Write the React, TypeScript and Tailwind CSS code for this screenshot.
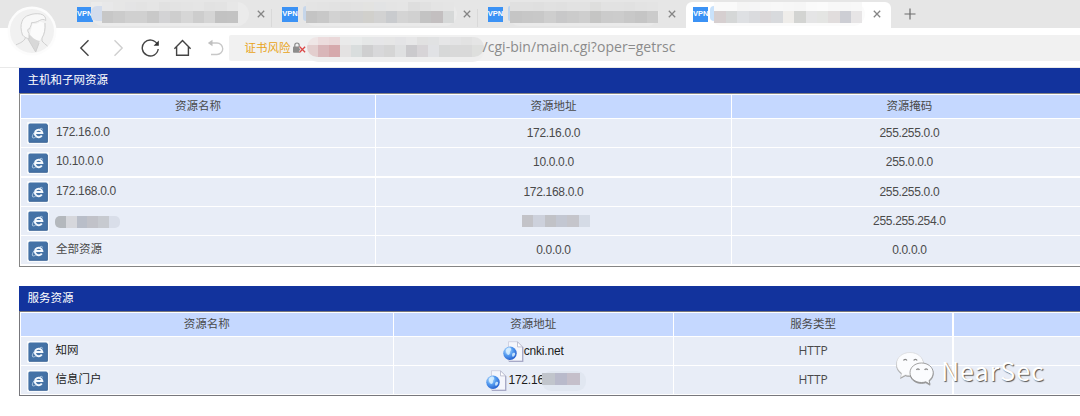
import React from "react";

const cjk = "font-['Liberation_Sans','Noto_Sans_CJK_SC',sans-serif]";
const digits = "text-[12px] tracking-[-0.32px]";

function Mosaic({ upper = [], lower, className, upperClass = "h-[10px]", lowerClass = "h-[12px]" }: {
  upper?: string[];
  lower: string[];
  className: string;
  upperClass?: string;
  lowerClass?: string;
}) {
  return (
    <div className={`flex shrink-0 flex-col overflow-hidden ${className}`}>
      {upper.length > 0 && (
        <div className={`flex ${upperClass}`}>
          {upper.map((c, i) => <span key={i} className={`flex-1 ${c}`} />)}
        </div>
      )}
      <div className={`flex ${lowerClass}`}>
        {lower.map((c, i) => <span key={i} className={`flex-1 ${c}`} />)}
      </div>
    </div>
  );
}

function Close() {
  return (
    <svg className="h-[8px] w-[8px] shrink-0" viewBox="0 0 8 8" fill="none" stroke="#858585" strokeWidth="1.3">
      <path d="M.8.8l6.4 6.4M7.2.8L.8 7.2" />
    </svg>
  );
}

function VpnBadge() {
  return (
    <span className="flex h-[15px] w-[15.5px] shrink-0 items-center justify-center overflow-hidden bg-[#3b92f5] font-['Liberation_Sans',sans-serif] text-[7.5px] leading-none font-bold text-white">
      VPN
    </span>
  );
}

const tabs = [
  {
    smear: "ml-[-1.5px] w-[158px] rounded-r-[12px] rounded-bl-[12px] bg-[#ebebeb] pl-[11px] pr-[11px]",
    left: "-ml-[11px] w-[11px] rounded-l-[6px] bg-[#d3dcec]",
    upper: ["bg-[#e8e8e9]", "bg-[#e6e6e6]", "bg-[#e4e4e5]", "bg-[#e3e3e3]", "bg-[#e5e5e5]", "bg-[#e1e1e1]", "bg-[#e3e3e3]", "bg-[#e4e4e4]", "bg-[#e5e5e5]", "bg-[#e2e2e2]", "bg-[#e3e3e3]", "bg-[#e7e7e7]"],
    lower: ["bg-[#c7c7c7]", "bg-[#cbcbcb]", "bg-[#d0d0d0]", "bg-[#d0d0d0]", "bg-[#c9c9c9]", "bg-[#d3d3d5]", "bg-[#cecece]", "bg-[#d6d6d6]", "bg-[#cdcdcd]", "bg-[#d5d5d5]", "bg-[#c2c2c2]", "bg-[#c3c3c3]"],
  },
  {
    smear: "ml-[5px] w-[154px] rounded-[12px] bg-[#eaeaea] pl-[3px] pr-[3px]",
    left: "-ml-[3px] w-[3px] rounded-l-[3px] bg-[#c6d6ea]",
    upper: ["bg-[#e4e4e4]", "bg-[#e3e3e3]", "bg-[#e2e2e2]", "bg-[#e1e1e1]", "bg-[#e2e2e2]", "bg-[#e3e3e1]", "bg-[#e2e3e4]", "bg-[#e4e4e4]", "bg-[#e5e5e5]", "bg-[#dedede]", "bg-[#e1e1e1]", "bg-[#e4e4e4]", "bg-[#e5e5e5]"],
    lower: ["bg-[#c4c4c4]", "bg-[#c8c8c8]", "bg-[#d2d2d2]", "bg-[#cecece]", "bg-[#cfcfcf]", "bg-[#d1d0cc]", "bg-[#d2d2d2]", "bg-[#c9cbce]", "bg-[#d4d4d4]", "bg-[#d1d1d1]", "bg-[#c3c3c3]", "bg-[#c3bfc0]", "bg-[#d6d8d8]"],
  },
  {
    smear: "ml-[5px] w-[151px] rounded-[12px] bg-[#eaeaea] pl-[2px] pr-[1px]",
    left: "-ml-[2px] w-[2px] rounded-l-[2px] bg-[#bdd4ee]",
    upper: ["bg-[#e0e0e0]", "bg-[#e0e0e0]", "bg-[#dfdfdf]", "bg-[#e1e1e1]", "bg-[#e0e0e0]", "bg-[#e2e2e2]", "bg-[#e2e2e2]", "bg-[#dededd]", "bg-[#e2e2e2]", "bg-[#e2e2e2]", "bg-[#e1e1e1]", "bg-[#e3e3e3]", "bg-[#e4e4e4]"],
    lower: ["bg-[#c5c5c5]", "bg-[#c7c7c7]", "bg-[#c8c8c8]", "bg-[#cecece]", "bg-[#c8c8c9]", "bg-[#cbcbcb]", "bg-[#cecece]", "bg-[#c5c5c4]", "bg-[#cbcbcb]", "bg-[#cccccc]", "bg-[#c8c8c8]", "bg-[#c5c5c5]", "bg-[#cbcbcb]"],
  },
  {
    smear: "ml-[2px] w-[155px] rounded-[12px] bg-[#fbfbfb] pl-[4px] pr-[3px]",
    left: "-ml-[4px] w-[4px] rounded-l-[4px] bg-[#c9e2fb]",
    upper: ["bg-[#fafafa]", "bg-[#fafafa]", "bg-[#f5f5f5]", "bg-[#f5f5f6]", "bg-[#f7f7f7]", "bg-[#f8f8f8]", "bg-[#f7f7f7]", "bg-[#f6f6f6]", "bg-[#fafafa]", "bg-[#fbfbfb]", "bg-[#f8f8f8]", "bg-[#f7f7f7]", "bg-[#f8f8f8]"],
    lower: ["bg-[#d6cfd0]", "bg-[#d5d7d7]", "bg-[#dee0e3]", "bg-[#dadbde]", "bg-[#dad7d9]", "bg-[#d8dadd]", "bg-[#efedea]", "bg-[#d3d4d2]", "bg-[#e5e5e6]", "bg-[#e4e5e3]", "bg-[#e1dddd]", "bg-[#cdced4]", "bg-[#e7e5e6]"],
  },
];

function TabStrip() {
  return (
    <div className="flex h-[28px] bg-[#e6e6e6] pl-[67px]">
      {tabs.map((t, i) => {
        const active = i === 3;
        return (
          <div
            key={i}
            className={
              active
                ? "mt-[2px] ml-[3px] flex h-[26px] w-[205px] shrink-0 items-center rounded-t-[6px] bg-white pb-[2px] pl-[7px]"
                : `flex h-[28px] w-[205.33px] shrink-0 items-center pl-[10px] ${i < 2 ? "bg-[linear-gradient(#d9d9d9,#d9d9d9)] bg-[length:1px_18px] bg-[position:right_9px] bg-no-repeat" : ""}`
            }
          >
            <VpnBadge />
            <div className={`flex h-[24px] shrink-0 ${t.smear}`}>
              <span className={`mt-[4px] h-[15px] shrink-0 ${t.left}`} />
              <Mosaic className="flex-1" upper={t.upper} lower={t.lower} upperClass="h-[9px]" />
            </div>
            <span className="flex-1" />
            <span className={active ? "mr-[10px] flex" : "mr-[7px] flex"}><Close /></span>
          </div>
        );
      })}
      <svg className="mt-[8px] ml-[13.5px] h-[12px] w-[12px]" viewBox="0 0 12 12" stroke="#6c6c6c" strokeWidth="1.2">
        <path d="M6 .5v11M.5 6h11" />
      </svg>
    </div>
  );
}

const urlUpper = ["bg-[#efe6e6]", "bg-[#ecdcdd]", "bg-[#ead8d9]", "bg-[#eaeaea]", "bg-[#e9ebeb]", "bg-[#e5e7e7]", "bg-[#e6e6e8]", "bg-[#e6e6e6]", "bg-[#e4e4e6]", "bg-[#e7e7e8]", "bg-[#e1e1e1]", "bg-[#e1e2e3]", "bg-[#e6e6e7]", "bg-[#e4e4e5]", "bg-[#e2e2e2]", "bg-[#e5e5e5]"];
const urlLower = ["bg-[#e3cece]", "bg-[#d9b6b9]", "bg-[#d6a9ac]", "bg-[#e4e2e2]", "bg-[#d9dddd]", "bg-[#cfcfd0]", "bg-[#d8d8da]", "bg-[#d5d5d5]", "bg-[#dfe0e1]", "bg-[#cbcacd]", "bg-[#d7d4d7]", "bg-[#e1e2e5]", "bg-[#d7d8d8]", "bg-[#d9d9d9]", "bg-[#d9d9d9]", "bg-[#dedfdd]"];

function Toolbar() {
  return (
    <div className="flex h-[40px] items-center border-b border-[#e9e9e9] bg-white pl-[79px]">
      <svg className="h-[18px] w-[138px] shrink-0" viewBox="0 0 144 18" preserveAspectRatio="none" fill="none" strokeWidth="1.4">
        <g transform="scale(1.0435 1)">
          <path d="M9.5 1.2L1.8 9l7.7 7.8" stroke="#444" />
          <path d="M35.5 1.2L43.2 9l-7.7 7.8" stroke="#cfcfcf" />
          <path d="M78.300 5.200A8 8 0 1 0 79.200 10" stroke="#444" />
          <path d="M79.800 1.500v5.300h-5.200z" fill="#333" />
          <path d="M95.400 9.800L103.500 1.500l8.100 8.300M97.600 8v8.300h11.800V8" stroke="#444" />
        </g>
      </svg>
      <svg className="-ml-[10px] h-[18px] w-[18px] shrink-0" viewBox="0 0 18 18" fill="none" stroke="#c8c8c8" strokeWidth="1.4">
        <path d="M2.500 4H10a5.500 5.500 0 0 1 0 11.500H4" />
        <path d="M5.500.8v6.400L.8 4z" fill="#c0c0c0" stroke="none" />
      </svg>
      <div className="ml-[4px] flex h-[26px] flex-1 items-center rounded-l-[2px] bg-[#f1f1f1] pl-[15.5px]">
        <span className={`shrink-0 text-[11.5px] leading-[16px] text-[#e8a317] ${cjk}`}>证书风险</span>
        <svg className="ml-[1px] h-[12px] w-[14px] shrink-0" viewBox="0 0 14 12">
          <rect x="1" y="4.5" width="7.5" height="6.2" rx=".8" fill="#8c8c8c" />
          <path d="M2.800 5V3.200a2.200 2.200 0 0 1 4.400 0V5" fill="none" stroke="#8c8c8c" strokeWidth="1.2" />
          <path d="M7.700 4.800l5.400 5.400M13.100 4.800l-5.400 5.400" stroke="#f1f1f1" strokeWidth="2.6" />
          <path d="M7.700 4.800l5.400 5.400M13.100 4.800l-5.400 5.400" stroke="#dc4848" strokeWidth="1.3" />
        </svg>
        <div className="mt-[3px] ml-[1px] flex h-[25px] w-[177px] shrink-0 rounded-[12px] bg-[#eeeeee]">
          <Mosaic className="h-[20px] w-full rounded-[10px]" upper={urlUpper} lower={urlLower} upperClass="h-[8px]" />
        </div>
        <span className="ml-[-1px] -mt-[2px] shrink-0 font-['Open_Sans',sans-serif] text-[14px] leading-[20px] tracking-[0.04px] text-[#8b8b8b]">
          /cgi-bin/main.cgi?oper=getrsc
        </span>
      </div>
    </div>
  );
}

function BrowserIcon() {
  return (
    <svg className="h-[22px] w-[22px] shrink-0" viewBox="0 0 22 22">
      <rect width="22" height="22" rx="1" fill="#f9fbfd" />
      <rect x="1.4" y="1.4" width="19.2" height="19.2" rx="1.6" fill="#4472a6" />
      <path d="M2 20.300h18.400V3" fill="none" stroke="#365f91" strokeWidth=".8" />
      <path d="M14.800 13.400a3.700 3.700 0 1 1 .5-2.500H8.800" fill="none" stroke="#f3f8fd" strokeWidth="2" />
      <path d="M7.300 10.400c-2.100 3-2.600 5.200-1.300 5.500.9.2 2-.4 3.100-1.300M12.500 7c1.800-.9 3-.9 3.100.6" fill="none" stroke="#b5cee6" strokeWidth="1" />
    </svg>
  );
}

function PageIcon() {
  return (
    <svg className="h-[21px] w-[21px] shrink-0" viewBox="0 0 21 21">
      <defs>
        <radialGradient id="globe" cx=".35" cy=".3" r=".8">
          <stop offset="0" stopColor="#cbe9ff" />
          <stop offset=".45" stopColor="#559cf0" />
          <stop offset="1" stopColor="#1c55c8" />
        </radialGradient>
      </defs>
      <path d="M5.500.7h9.200l5 5v14.600H5.500z" fill="#f5f6fc" stroke="#c9cbdc" strokeWidth=".8" />
      <path d="M19.700 5.900v14.400H6" fill="none" stroke="#a7a9c6" strokeWidth="1.3" />
      <path d="M14.500.9v5h5z" fill="#fff" stroke="#b3b5c9" strokeWidth=".8" />
      <circle cx="7" cy="12.3" r="6.7" fill="url(#globe)" />
      <path d="M3.200 8.200c2-2.200 4.700-2 5 0 .2 1.600-1.600 1.600-1.300 3.200.3 1.500-1 3-2 2.400-1.200-.8-2.800-3.600-1.700-5.600zM10 12c1.600-.7 2.600.2 2 1.800-.6 1.600-2 2.600-2.600 1.600s-.4-2.800.6-3.400z" fill="#d9f0ff" opacity=".85" />
    </svg>
  );
}

function Title({ children }: { children: React.ReactNode }) {
  return (
    <div className={`flex h-[25px] items-center bg-[#12339d] pb-px pl-[8.5px] text-[11.5px] leading-[16px] text-white ${cjk}`}>
      {children}
    </div>
  );
}

const hostRows: { name: React.ReactNode; addr: React.ReactNode; mask: string }[] = [
  { name: "172.16.0.0", addr: "172.16.0.0", mask: "255.255.0.0" },
  { name: "10.10.0.0", addr: "10.0.0.0", mask: "255.0.0.0" },
  { name: "172.168.0.0", addr: "172.168.0.0", mask: "255.255.0.0" },
  {
    name: <Mosaic className="mt-[4px] -ml-px w-[65px] rounded-[5px]" lower={["bg-[#b4b8bd]", "bg-[#d6d7dc]", "bg-[#b9bec9]", "bg-[#c1c2c9]", "bg-[#c7cad0]", "bg-[#d9dee9]"]} />,
    addr: <Mosaic className="ml-[5px] w-[68px]" lower={["bg-[#c3c3c8]", "bg-[#cdd1dc]", "bg-[#c1c2c7]", "bg-[#c3c7d2]", "bg-[#c5c5cb]", "bg-[#d5dbe6]"]} />,
    mask: "255.255.254.0",
  },
  { name: <span className="text-[11.5px] tracking-normal">全部资源</span>, addr: "0.0.0.0", mask: "0.0.0.0" },
];

const headCell = "flex items-center justify-center bg-[#c5d8ff]";
const cell = `flex items-center justify-center bg-[#e8edf7] ${digits}`;

function HostTable() {
  return (
    <section className={`ml-[19px] w-[1070px] text-[11.5px] leading-[16px] text-[#4a4a4a] ${cjk}`}>
      <Title>主机和子网资源</Title>
      <div className="grid grid-cols-[354px_354.5px_355px] grid-rows-[23px_28px_28px_28px_28px_28px] gap-x-[1.2px] gap-y-[1.35px] border-y border-l border-[#858585] bg-white pt-[0.5px] pb-[2px] pl-px">
        <div className={headCell}>资源名称</div>
        <div className={headCell}>资源地址</div>
        <div className={headCell}>资源掩码</div>
        {hostRows.map((r, i) => (
          <React.Fragment key={i}>
            <div className="flex items-center bg-[#e8edf7] pt-px pl-[5.5px]">
              <BrowserIcon />
              <div className={`-mt-[3px] ml-[7.5px] ${digits}`}>{r.name}</div>
            </div>
            <div className={cell}>{r.addr}</div>
            <div className={cell}>{r.mask}</div>
          </React.Fragment>
        ))}
      </div>
    </section>
  );
}

function ServiceTable() {
  return (
    <section className={`mt-[19px] ml-[19px] w-[1220px] text-[11.5px] leading-[16px] text-[#4a4a4a] ${cjk}`}>
      <Title>服务资源</Title>
      <div className="grid grid-cols-[371.5px_279px_278.5px_279px] grid-rows-[23px_28px_28px] gap-x-[1.2px] gap-y-[1.35px] border-y border-l border-[#77777c] bg-white pt-[0.5px] pb-px pl-px">
        <div className={headCell}>资源名称</div>
        <div className={headCell}>资源地址</div>
        <div className={headCell}>服务类型</div>
        <div className={headCell} />
        {["知网", "信息门户"].map((name, i) => (
          <React.Fragment key={name}>
            <div className="flex items-center bg-[#e8edf7] pt-px pl-[5.5px] text-[#1c1c1c]">
              <BrowserIcon />
              <div className="-mt-[4px] ml-[7px]">{name}</div>
            </div>
            <div className="flex items-center justify-center bg-[#e8edf7] pt-px text-[#1c1c1c]">
              <PageIcon />
              {i === 0 ? (
                <span className="mt-[-2px] text-[12px] tracking-[-0.2px]">cnki.net</span>
              ) : (
                <>
                  <span className="mt-[-2px] ml-px text-[12px] tracking-[-0.2px]">172.16</span>
                  <div className="mt-px -mr-[6px] -ml-[2px] flex h-[20px] w-[44px] rounded-[9px] bg-[#e1e7f1]">
                    <Mosaic className="mt-[2px] w-[38px]" lower={["bg-[#c1c5cc]", "bg-[#b9bacb]", "bg-[#c5bfca]"]} />
                  </div>
                </>
              )}
            </div>
            <div className="flex items-center justify-center bg-[#e8edf7] font-['Open_Sans',sans-serif] text-[12px]">HTTP</div>
            <div className="bg-[#e8edf7]" />
          </React.Fragment>
        ))}
      </div>
    </section>
  );
}

function Avatar() {
  return (
    <svg className="absolute top-[6px] left-[7px] h-[50px] w-[50px]" viewBox="0 0 50 50">
      <circle cx="25" cy="25" r="24.5" fill="#fcfcfc" />
      <circle cx="25" cy="25" r="22" fill="#f1f1f1" />
      <path d="M22 29l-1 4 7.700 13L33 34.500 34.500 32z" fill="#d8d8d8" />
      <path d="M25.500 18c3 .3 6-.5 7.500-2.500l4 1.500c.8 7 0 14-4.500 18-4-1-8-3.500-9.500-7z" fill="#fbfbfb" />
      <path d="M15.500 29c-1.800-5-2-10-.5-13.500 1-3 3.500-5.500 7-6.300 4-1.700 8-1.700 11.500-1.200 3.500.8 5.500 3 5.300 6.500-2-1.500-4-1.300-6.300 0-2.500 1.500-4.500 2-8 2.200 0 3-1.500 4-2 6.300-2-.5-2.500 1.500-.5 4.500v5.300c-2.500-.5-5-1.800-6.500-3.800z" fill="#f8f8f8" stroke="#cdcdcd" strokeWidth=".9" />
      <path d="M38 17c.5 6-.5 11-3 15v3c1.500 2 3.500 3.500 5.500 5M18.500 31.500c-1 3.500-5 5.500-9.500 7.300M21 33l7.700 13L32 37" fill="none" stroke="#cfcfcf" strokeWidth="1" />
    </svg>
  );
}

function Watermark() {
  return (
    <div className="absolute top-[350px] left-[895px] flex items-center">
      <svg className="h-[37px] w-[42px] shrink-0 drop-shadow-[0.5px_1px_0.3px_#999]" viewBox="0 0 42 37">
        <path d="M15 2.500C7.300 2.500 1.500 7.600 1.500 14c0 3.800 2 7 5.200 9.200L5.500 27.500l4.800-2.600c1.500.4 3 .6 4.700.6 7.700 0 13.500-5.100 13.500-11.500S22.700 2.500 15 2.500z" fill="#fbfcfe" stroke="#ccc" strokeWidth=".5" />
        <path d="M26.500 13C20 13 15 17.300 15 22.700s5 9.800 11.500 9.800c1.600 0 3-.3 4.300-.7l4.200 2.400-1-3.700c2.500-1.800 4.200-4.600 4.200-7.800C38.200 17.300 33 13 26.500 13z" fill="#fbfcfe" stroke="#8a8a8a" strokeWidth=".8" />
        <path d="M8.500 10.500a1.800 1.800 0 0 1 3.400 0M18.700 10.500a1.800 1.800 0 0 1 3.400 0M21.500 20a1.500 1.500 0 0 1 2.900 0M29.700 20a1.500 1.500 0 0 1 2.900 0" fill="none" stroke="#858585" strokeWidth="1.2" />
      </svg>
      <span className="mt-[2px] ml-[4px] font-['Noto_Sans_CJK_SC',sans-serif] text-[25px] leading-[34px] tracking-[1px] text-white [text-shadow:1px_1px_1px_#555]">NearSec</span>
    </div>
  );
}

export default function App() {
  return (
    <main className="relative h-[416px] w-[1080px] overflow-hidden bg-white">
      <TabStrip />
      <Toolbar />
      <HostTable />
      <ServiceTable />
      <Avatar />
      <Watermark />
    </main>
  );
}
